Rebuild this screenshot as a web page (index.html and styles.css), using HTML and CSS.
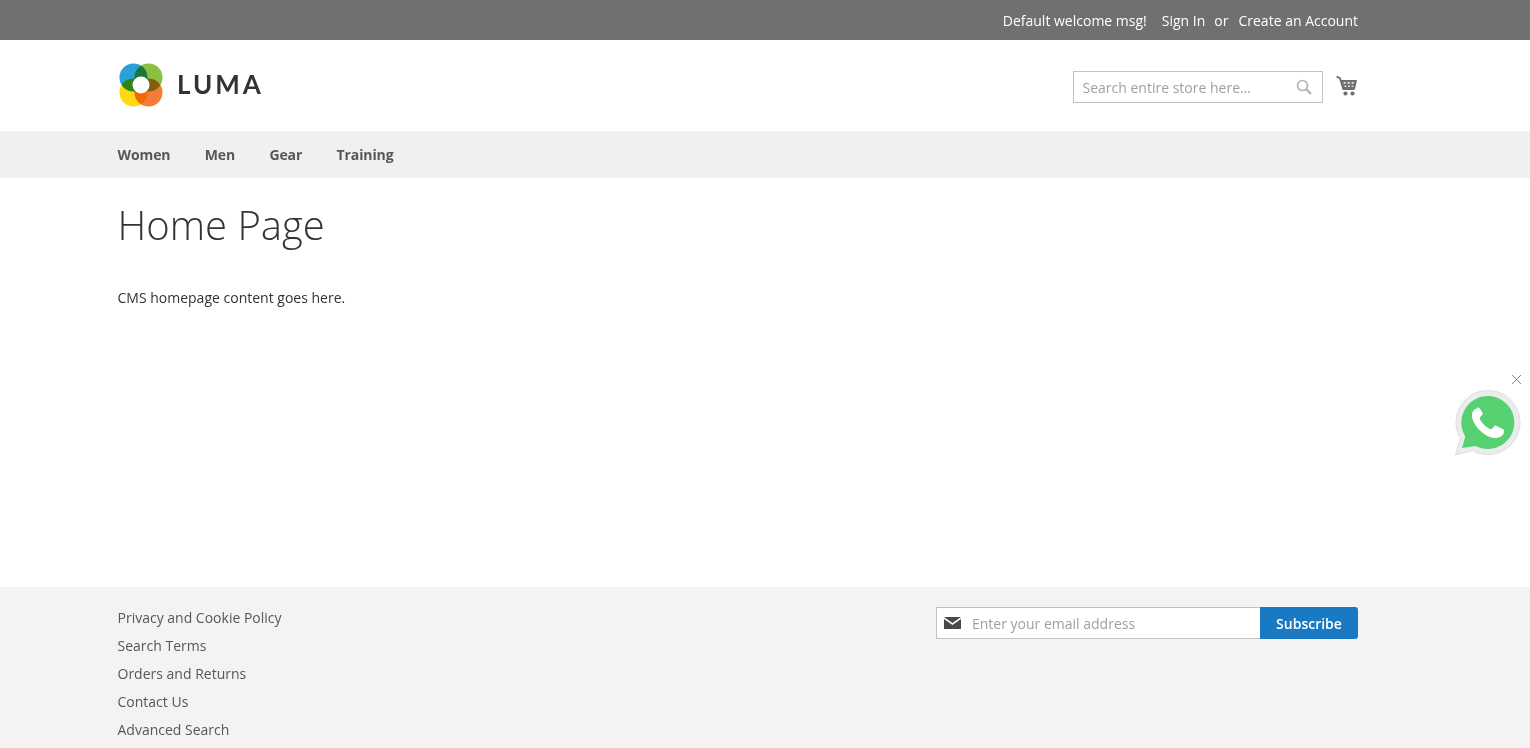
FILE: index.html
```html
<!DOCTYPE html>
<html lang="en">
<head>
<meta charset="utf-8">
<title>Home Page</title>
<link rel="stylesheet" href="styles.css">
</head>
<body>
<div class="topbar">
  <div class="wrap topbar-in">
    <span class="welcome">Default welcome msg!</span>
    <a class="toplink signin">Sign In</a>
    <span class="or">or</span>
    <a class="toplink create">Create an Account</a>
  </div>
</div>
<header class="header">
  <div class="wrap header-in">
    <div class="logo">
      <svg class="logo-mark" width="46" height="46" viewBox="0 0 46 46">
        <circle class="petal" cx="15.500" cy="14.500" r="14" fill="#2a9fd8"/>
        <circle class="petal" cx="30.500" cy="14.500" r="14" fill="#8bc043"/>
        <circle class="petal" cx="15.500" cy="29.500" r="14" fill="#fdd813"/>
        <circle class="petal" cx="30.500" cy="29.500" r="14" fill="#f47b3a"/>
        <circle cx="23" cy="22" r="8.500" fill="#fff"/>
      </svg>
      <span class="logo-text">LUMA</span>
    </div>
    <div class="tools">
      <div class="search">
        <span class="search-ph">Search entire store here...</span>
        <svg width="16" height="16" viewBox="0 0 16 16" fill="none" stroke="#b5b5b5">
          <circle cx="6.500" cy="6.500" r="5" stroke-width="1.700"/>
          <path d="M10 10l5 5" stroke-width="2.400"/>
        </svg>
      </div>
      <svg class="cart" width="22" height="22" viewBox="0 0 22 22">
        <path d="M.5 1.500l3.500 1.700 3.300 11h11" fill="none" stroke="#6e6e6c" stroke-width="1.800"/>
        <path d="M4.800 5h16.200l-2 9H7.200z" fill="#6e6e6c"/>
        <path d="M7.500 7h2.500v1.700H7.500zM11.500 7h2.500v1.700h-2.500zM15.500 7H18v1.700h-2.500zM8.500 10.500h2v1.500h-2zM12 10.500h2v1.500h-2zM15.500 10.500h2v1.500h-2z" fill="#d8d8d8"/>
        <circle cx="9.500" cy="18.500" r="2.100" fill="#6e6e6c"/>
        <circle cx="16.500" cy="18.500" r="2.100" fill="#6e6e6c"/>
      </svg>
    </div>
  </div>
</header>
<nav class="nav">
  <div class="wrap nav-in">
    <a>Women</a><a>Men</a><a>Gear</a><a>Training</a>
  </div>
</nav>
<main class="main">
  <div class="wrap">
    <h1 class="title">Home Page</h1>
    <p class="content">CMS homepage content goes here.</p>
  </div>
</main>
<div class="chat">
  <svg class="chat-x" width="11" height="11" viewBox="0 0 11 11" fill="none" stroke="#777" stroke-width="0.900"><path d="M1 1l9 9M10 1l-9 9"/></svg>
  <svg width="68" height="68" viewBox="0 0 68 68">
    <path d="M1.500 66l4.800-16.500A32 32 0 1 1 18.500 61.500z" fill="#ececec" stroke="#dedede" stroke-width="1"/>
    <path d="M8 59l3.300-11.500A26.500 26.500 0 1 1 21.500 57z" fill="#57d072"/>
    <path d="M23 19.500c-2.500 0-5 3-5 7 0 5 3.500 10.500 8 15 4.500 4.500 10 7.500 15 7.500 4.500 0 9-2.500 9-6.500 0-.8 0-1.500-.3-2l-8-4c-1.300-.4-3.300 3.900-4.700 3.800-2-.1-5.200-2.600-7.500-5-2.200-2.300-3.900-5-3.800-6.300.1-1.200 3-2.600 3-4.500 0-1-2.700-5-3.200-5.300-.5-.2-1.500-.7-2.500-.7z" fill="#fff"/>
  </svg>
</div>
<footer class="footer">
  <div class="wrap footer-in">
    <ul class="links">
      <li>Privacy and Cookie Policy</li>
      <li>Search Terms</li>
      <li>Orders and Returns</li>
      <li>Contact Us</li>
      <li>Advanced Search</li>
    </ul>
    <div class="subscribe">
      <div class="email">
        <svg width="17" height="12" viewBox="0 0 17 12"><path d="M0 0h17L8.500 6zM0 2l8.500 6L17 2v10H0z" fill="#4a4a4a"/></svg>
        <span class="email-ph">Enter your email address</span>
      </div>
      <div class="sub-btn">Subscribe</div>
    </div>
  </div>
</footer>
</body>
</html>
```
FILE: styles.css
```css
* { box-sizing: border-box; }
html, body { margin: 0; padding: 0; }
body {
  height: 748px;
  overflow: hidden;
  background: #fff;
  color: #333;
  font-family: "Open Sans", "Liberation Sans", sans-serif;
  font-size: 14px;
  position: relative;
}
.wrap { width: 1240.500px; margin-left: 117.500px; }
.topbar { height: 40px; background: #6e716e; color: #fff; }
.topbar-in { height: 40px; display: flex; justify-content: flex-end; align-items: center; padding-top: 1px; }
.signin { margin-left: 15px; }
.or { margin-left: 9px; }
.create { margin-left: 10px; }
.header { height: 91px; }
.header-in { display: flex; justify-content: space-between; height: 91px; }
.logo { display: flex; align-items: flex-start; padding-top: 22.500px; }
.logo-mark { display: block; }
.petal { mix-blend-mode: multiply; }
.logo-text {
  font-family: "Lato", sans-serif;
  font-size: 26px;
  font-weight: 700;
  letter-spacing: 3px;
  color: #333;
  margin-left: 13.500px;
  margin-top: 4px;
  line-height: 34px;
}
.tools { display: flex; align-items: flex-start; }
.search {
  width: 250px;
  height: 32px;
  margin-top: 31px;
  border: 1px solid #c2c2c2;
  display: flex;
  align-items: center;
  justify-content: space-between;
  padding: 0 10px 0 8.500px;
  color: #a0a0a0;
}
.cart { margin-left: 13px; margin-top: 35px; }
.nav { height: 47px; background: #f0f0f0; }
.nav-in { display: flex; gap: 34.300px; height: 47px; align-items: center; font-weight: 700; color: #575757; letter-spacing: -0.1px; }
.main { height: 409px; }
.title {
  margin: 0;
  padding-top: 21px;
  font-size: 40px;
  font-weight: 300;
  line-height: 52px;
  color: #333;
}
.content { margin: 37px 0 0; line-height: 20px; }
.chat { position: absolute; left: 1454px; top: 372px; width: 76px; height: 90px; }
.chat > svg { position: absolute; left: 0; top: 17px; }
.chat > .chat-x { left: 57px; top: 2px; }
.footer { height: 161px; background: #f3f3f3; }
.footer-in { display: flex; justify-content: space-between; padding-top: 17px; }
.links { list-style: none; margin: 0; padding: 0; color: #575757; }
.links li { height: 28px; line-height: 28px; }
.subscribe { display: flex; height: 32px; margin-top: 3px; }
.email {
  width: 324px;
  height: 32px;
  background: #fff;
  border: 1px solid #c2c2c2;
  border-right: 0;
  display: flex;
  align-items: center;
  padding-left: 7px;
  color: #a0a0a0;
}
.email-ph { margin-left: 11px; }
.sub-btn {
  width: 98px;
  height: 32px;
  background: #1979c3;
  color: #fff;
  font-weight: 600;
  display: flex;
  align-items: center;
  justify-content: center;
  border-radius: 0 3px 3px 0;
}
```
